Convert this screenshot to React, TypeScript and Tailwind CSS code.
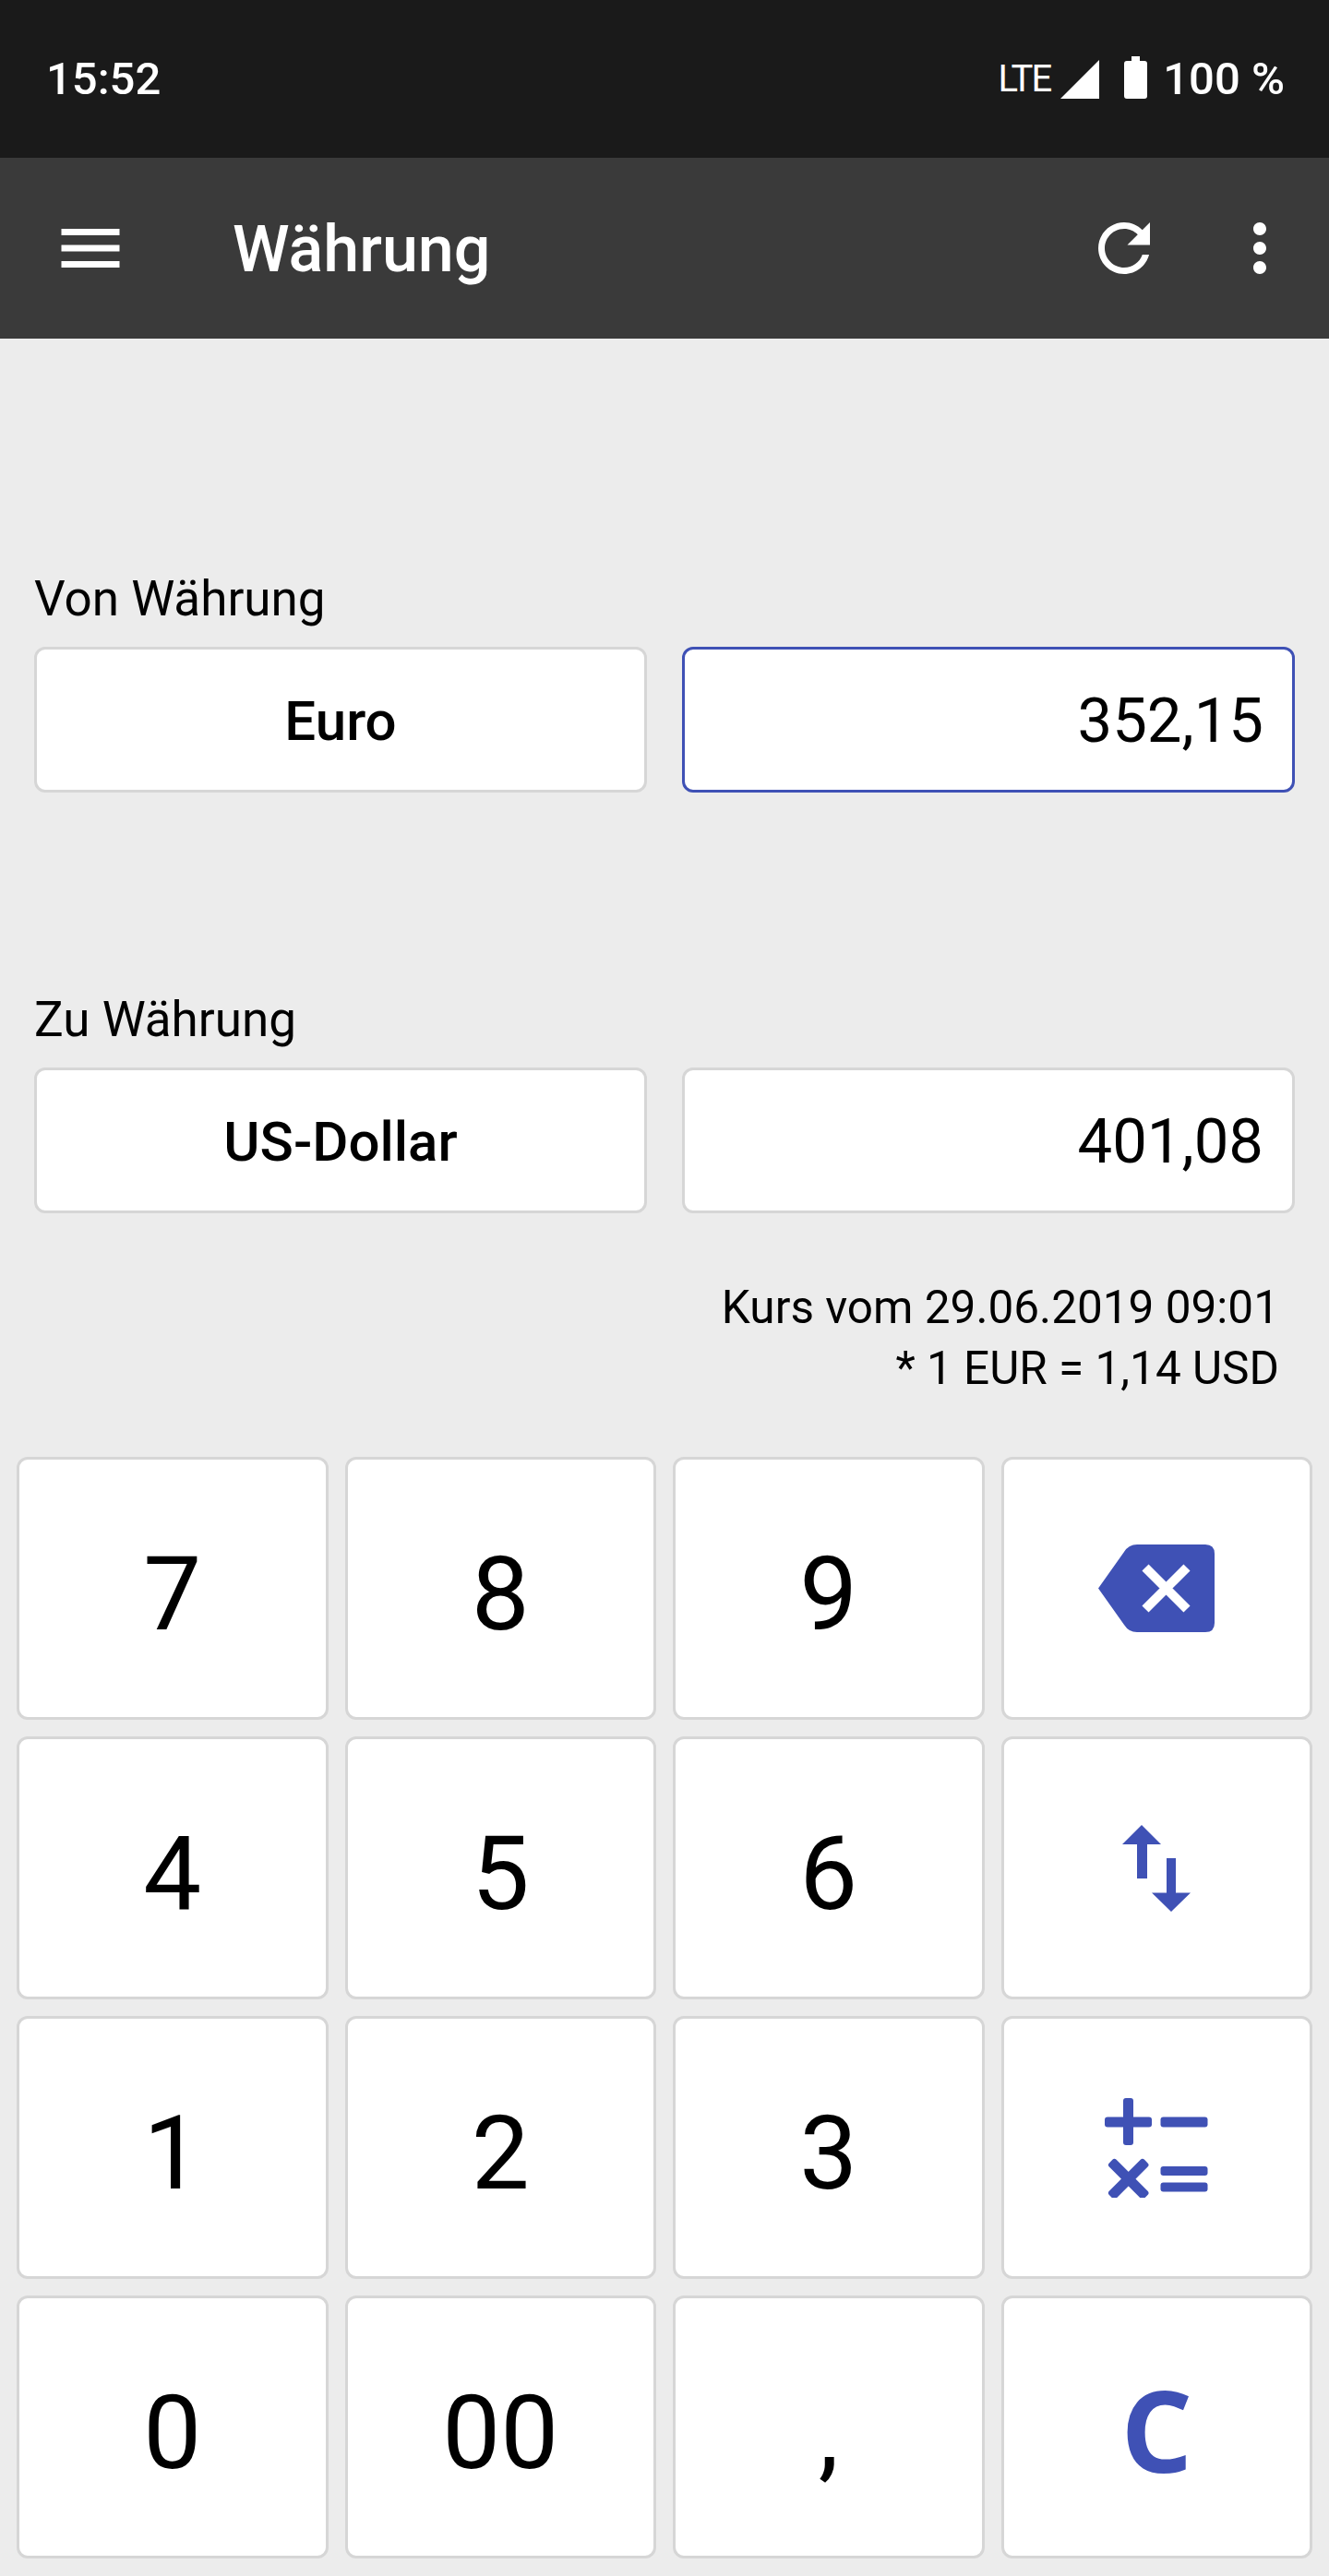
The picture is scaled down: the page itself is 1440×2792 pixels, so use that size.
import React from 'react';

const BLUE = '#3f51b5';

const Backspace = () => (
  <svg width="126" height="95" viewBox="0 0 126 95">
    <path d="M0 47.5 L28 8 Q33 0 42 0 H116 Q126 0 126 10 V85 Q126 95 116 95 H42 Q33 95 28 87 Z" fill={BLUE} />
    <path d="M51 25 L96 70 M96 25 L51 70" stroke="#fff" strokeWidth="10" />
  </svg>
);

const SwapArrows = () => (
  <svg width="74" height="94" viewBox="0 0 74 94" fill={BLUE}>
    <path d="M21 0 L42 21 H27 V58 H16 V21 H0 Z" />
    <path d="M53 94 L32 73.5 H48 V36 H58 V73.5 H74 Z" />
  </svg>
);

const Operators = () => (
  <svg width="112" height="108" viewBox="0 0 112 108" fill={BLUE}>
    <rect x="0" y="20.5" width="51" height="11" rx="3" />
    <rect x="20" y="0" width="11" height="51" rx="3" />
    <rect x="60.5" y="20.5" width="51" height="11" rx="3" />
    <g transform="translate(25.7 87.7) rotate(45)">
      <rect x="-27" y="-5.5" width="54" height="11" rx="3" />
      <rect x="-5.5" y="-27" width="11" height="54" rx="3" />
    </g>
    <rect x="60.5" y="74" width="51" height="10" rx="3" />
    <rect x="60.5" y="91.5" width="51" height="10" rx="3" />
  </svg>
);

const Field = ({ children, active, bold }: { children: React.ReactNode; active?: boolean; bold?: boolean }) => (
  <div
    className={`h-[158px] rounded-[12px] border-[3px] bg-white flex items-center pt-[3px] text-black ${
      active ? 'border-[#3f51b5]' : 'border-[#d6d6d6]'
    } ${bold ? 'justify-center text-[60px] font-medium' : 'justify-end pr-[31px] text-[67px]'}`}
  >
    {children}
  </div>
);

const Key = ({ children }: { children: React.ReactNode }) => (
  <div className="h-[285px] rounded-[12px] border-[3px] border-[#d6d6d6] bg-white flex items-center justify-center text-[112px] text-black">
    {children}
  </div>
);

const Digit = ({ label }: { label: string }) => (
  <Key>
    <span className="pt-[12px]">{label}</span>
  </Key>
);

export default function App() {
  return (
    <div className="w-[1440px] h-[2792px] bg-[#ececec] font-['Roboto',sans-serif] overflow-hidden">
      {/* status bar */}
      <div className="h-[171px] bg-[#1a1a1a] flex items-center justify-between pl-[50px] pr-[48px] text-white text-[49px] font-medium">
        <span>15:52</span>
        <div className="flex items-center">
          <span className="text-[40px] font-normal tracking-[-2px]">LTE</span>
          <svg width="42" height="42" viewBox="0 0 42 42" className="ml-[11px]">
            <path d="M42 0 V42 H0 Z" fill="#fff" />
          </svg>
          <svg width="25" height="46" viewBox="0 0 25 46" className="ml-[27px] mb-[4px]">
            <path d="M8 0 H17 V5 H22 Q25 5 25 8 V43 Q25 46 22 46 H3 Q0 46 0 43 V8 Q0 5 3 5 H8 Z" fill="#fff" />
          </svg>
          <span className="ml-[17px]">100 %</span>
        </div>
      </div>

      {/* toolbar */}
      <div className="h-[196px] bg-[#3a3a3a] flex items-center text-white">
        <svg width="84" height="84" viewBox="0 0 24 24" fill="#fff" className="ml-[56px]">
          <path d="M3 18h18v-2H3v2zm0-5h18v-2H3v2zm0-7v2h18V6H3z" />
        </svg>
        <span className="ml-[112px] pt-[3px] text-[70px] font-medium">Währung</span>
        <div className="ml-auto flex items-center mr-[33px] gap-[63px]">
          <svg width="84" height="84" viewBox="0 0 24 24" fill="#fff">
            <path d="M17.65 6.35C16.2 4.9 14.21 4 12 4c-4.42 0-7.99 3.58-7.99 8s3.57 8 7.99 8c3.73 0 6.84-2.55 7.73-6h-2.08c-.82 2.33-3.04 4-5.65 4-3.31 0-6-2.69-6-6s2.69-6 6-6c1.66 0 3.14.69 4.22 1.78L13 11h7V4l-2.35 2.35z" />
          </svg>
          <svg width="84" height="84" viewBox="0 0 24 24" fill="#fff">
            <path d="M12 8c1.1 0 2-.9 2-2s-.9-2-2-2-2 .9-2 2 .9 2 2 2zm0 2c-1.1 0-2 .9-2 2s.9 2 2 2 2-.9 2-2-.9-2-2-2zm0 6c-1.1 0-2 .9-2 2s.9 2 2 2 2-.9 2-2-.9-2-2-2z" />
          </svg>
        </div>
      </div>

      {/* converter */}
      <div className="px-[37px] pt-[249px]">
        <div className="h-[66px] leading-[66px] text-[53px] text-black mb-[19px]">Von Währung</div>
        <div className="grid grid-cols-2 gap-[38px]">
          <Field bold>Euro</Field>
          <Field active>352,15</Field>
        </div>
        <div className="h-[66px] leading-[66px] text-[53px] text-black mt-[213px] mb-[19px]">Zu Währung</div>
        <div className="grid grid-cols-2 gap-[38px]">
          <Field bold>US-Dollar</Field>
          <Field>401,08</Field>
        </div>
        <div className="mt-[69px] pr-[17px] text-right text-[49.5px] leading-[66px] text-black">
          <div>Kurs vom 29.06.2019 09:01</div>
          <div>* 1 EUR = 1,14 USD</div>
        </div>
      </div>

      {/* keypad */}
      <div className="grid grid-cols-4 gap-[18px] px-[18px] mt-[63px]">
        <Digit label="7" />
        <Digit label="8" />
        <Digit label="9" />
        <Key><Backspace /></Key>
        <Digit label="4" />
        <Digit label="5" />
        <Digit label="6" />
        <Key><SwapArrows /></Key>
        <Digit label="1" />
        <Digit label="2" />
        <Digit label="3" />
        <Key><Operators /></Key>
        <Digit label="0" />
        <Digit label="00" />
        <Digit label="," />
        <Key><span className="pt-[5px] font-['Open_Sans',sans-serif] font-bold text-[#3f51b5] text-[122px]">C</span></Key>
      </div>
    </div>
  );
}
